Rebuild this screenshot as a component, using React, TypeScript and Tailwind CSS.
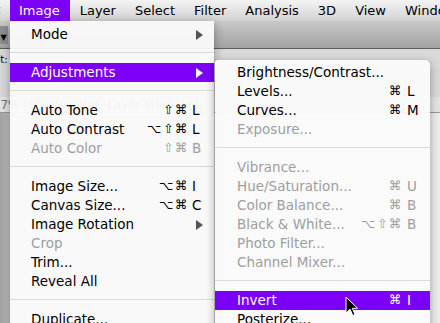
import React from "react";

type Row =
  | { sep: true }
  | {
      sep?: false;
      label: string;
      mods?: string;
      k?: string;
      off?: boolean;
      on?: boolean;
      sub?: boolean;
    };

const imageMenu: Row[] = [
  { label: "Mode", sub: true },
  { sep: true },
  { label: "Adjustments", sub: true, on: true },
  { sep: true },
  { label: "Auto Tone", mods: "⇧⌘", k: "L" },
  { label: "Auto Contrast", mods: "⌥⇧⌘", k: "L" },
  { label: "Auto Color", mods: "⇧⌘", k: "B", off: true },
  { sep: true },
  { label: "Image Size...", mods: "⌥⌘", k: "I" },
  { label: "Canvas Size...", mods: "⌥⌘", k: "C" },
  { label: "Image Rotation", sub: true },
  { label: "Crop", off: true },
  { label: "Trim..." },
  { label: "Reveal All" },
  { sep: true },
  { label: "Duplicate..." },
];

const adjustMenu: Row[] = [
  { label: "Brightness/Contrast..." },
  { label: "Levels...", mods: "⌘", k: "L" },
  { label: "Curves...", mods: "⌘", k: "M" },
  { label: "Exposure...", off: true },
  { sep: true },
  { label: "Vibrance...", off: true },
  { label: "Hue/Saturation...", mods: "⌘", k: "U", off: true },
  { label: "Color Balance...", mods: "⌘", k: "B", off: true },
  { label: "Black & White...", mods: "⌥⇧⌘", k: "B", off: true },
  { label: "Photo Filter...", off: true },
  { label: "Channel Mixer...", off: true },
  { sep: true },
  { label: "Invert", mods: "⌘", k: "I", on: true },
  { label: "Posterize..." },
];

function Arrow({ white }: { white?: boolean }) {
  return (
    <svg width="7" height="10" viewBox="0 0 7 10" className="shrink-0 mr-[11px]">
      <path d="M0 0 L7 5 L0 10 Z" fill={white ? "#ffffff" : "#555555"} />
    </svg>
  );
}

function Menu({ rows, keyCol, pl }: { rows: Row[]; keyCol: string; pl: string }) {
  return (
    <>
      {rows.map((r, i) => {
        if (r.sep) {
          return (
            <div key={i} className="h-[19px] pt-[8px]">
              <div className="h-px bg-[#dadada]" />
            </div>
          );
        }
        const color = r.on ? "text-white" : r.off ? "text-[#9e9e9e]" : "text-black";
        return (
          <div
            key={i}
            className={`h-[19px] flex items-center ${pl} ${color} ${r.on ? "bg-[#7c00f8]" : ""}`}
          >
            <span className="flex-1 whitespace-nowrap">{r.label}</span>
            {r.sub && <Arrow white={r.on} />}
            {r.k && (
              <>
                <span className="tracking-[1.5px] text-[12.5px] whitespace-nowrap">{r.mods}</span>
                <span className={`${keyCol} whitespace-nowrap`}>{r.k}</span>
              </>
            )}
          </div>
        );
      })}
    </>
  );
}

export default function App() {
  const bar = ["Layer", "Select", "Filter", "Analysis", "3D", "View", "Window"];
  return (
    <div className="relative w-[440px] h-[323px] overflow-hidden font-['DejaVu_Sans',sans-serif] bg-[#bdbdbd]">
      {/* menu bar */}
      <div className="h-[21px] flex items-center bg-gradient-to-b from-[#f4f4f4] to-[#d2d2d2] text-[13px] text-black whitespace-nowrap">
        <div className="w-[10px] shrink-0 overflow-hidden">
          <span className="block ml-[-5px] text-[#8fb3e0] text-[11px]">c</span>
        </div>
        <div className="shrink-0 h-[21px] flex items-center pl-[9px] pr-[10px] bg-[#7c00f8] text-white">Image</div>
        {bar.map((b) => (
          <div key={b} className="shrink-0 pl-[10px] pr-[9px]">
            {b}
          </div>
        ))}
      </div>

      {/* app toolbar */}
      <div className="h-[28px] bg-gradient-to-b from-[#c8c8c8] to-[#a3a3a3] border-b border-[#5d5d5d] flex items-center">
        <div className="w-[9px] h-[18px] ml-[-1px] bg-[#8e8e8e] flex items-center justify-center text-[8px] text-black pt-[6px]">▼</div>
      </div>

      {/* options bar */}
      <div className="h-[48px] bg-[#d9d9d9] text-[10px] text-black">
        <div className="ml-[-6px] pt-[3px]">nt:</div>
      </div>

      {/* document tab */}
      <div className="h-[16px] bg-[#e4e4e4] border-b border-[#9a9a9a] flex items-center text-[12px] text-[#777] whitespace-nowrap">
        <span className="ml-[-11px]">5.7% (Shadow tint, Layer Mask/16) *</span>
      </div>

      {/* document area */}
      <div className="flex h-[210px]">
        <div className="w-[12px] bg-gradient-to-r from-[#a2a2a2] to-[#c9c9c9]" />
        <div className="flex-1 bg-[#ececec]" />
      </div>

      {/* Image menu */}
      <div className="absolute left-[10px] top-[21px] w-[204px] pt-[4px] pb-[6px] bg-[rgba(250,250,250,0.95)] shadow-[0_3px_10px_rgba(0,0,0,0.35)] text-[13.5px]">
        <Menu rows={imageMenu} keyCol="w-[25px] pl-[3px]" pl="pl-[21px]" />
      </div>

      {/* Adjustments submenu */}
      <div className="absolute left-[215px] top-[60px] w-[215px] pt-[3px] pb-[6px] rounded-tl-[3px] rounded-tr-[5px] bg-[rgba(250,250,250,0.96)] shadow-[0_3px_10px_rgba(0,0,0,0.35)] text-[13.5px]">
        <Menu rows={adjustMenu} keyCol="w-[27px] pl-[4px]" pl="pl-[22px]" />
      </div>

      {/* cursor */}
      <svg className="absolute left-[345px] top-[296px]" width="14" height="22" viewBox="0 0 14 22">
        <path
          d="M1 1 L1 17 L5 13.2 L7.8 19.5 L10 18.5 L7.3 12.3 L12.5 12.3 Z"
          fill="#000"
          stroke="#fff"
          strokeWidth="1"
          strokeLinejoin="round"
        />
      </svg>
    </div>
  );
}
